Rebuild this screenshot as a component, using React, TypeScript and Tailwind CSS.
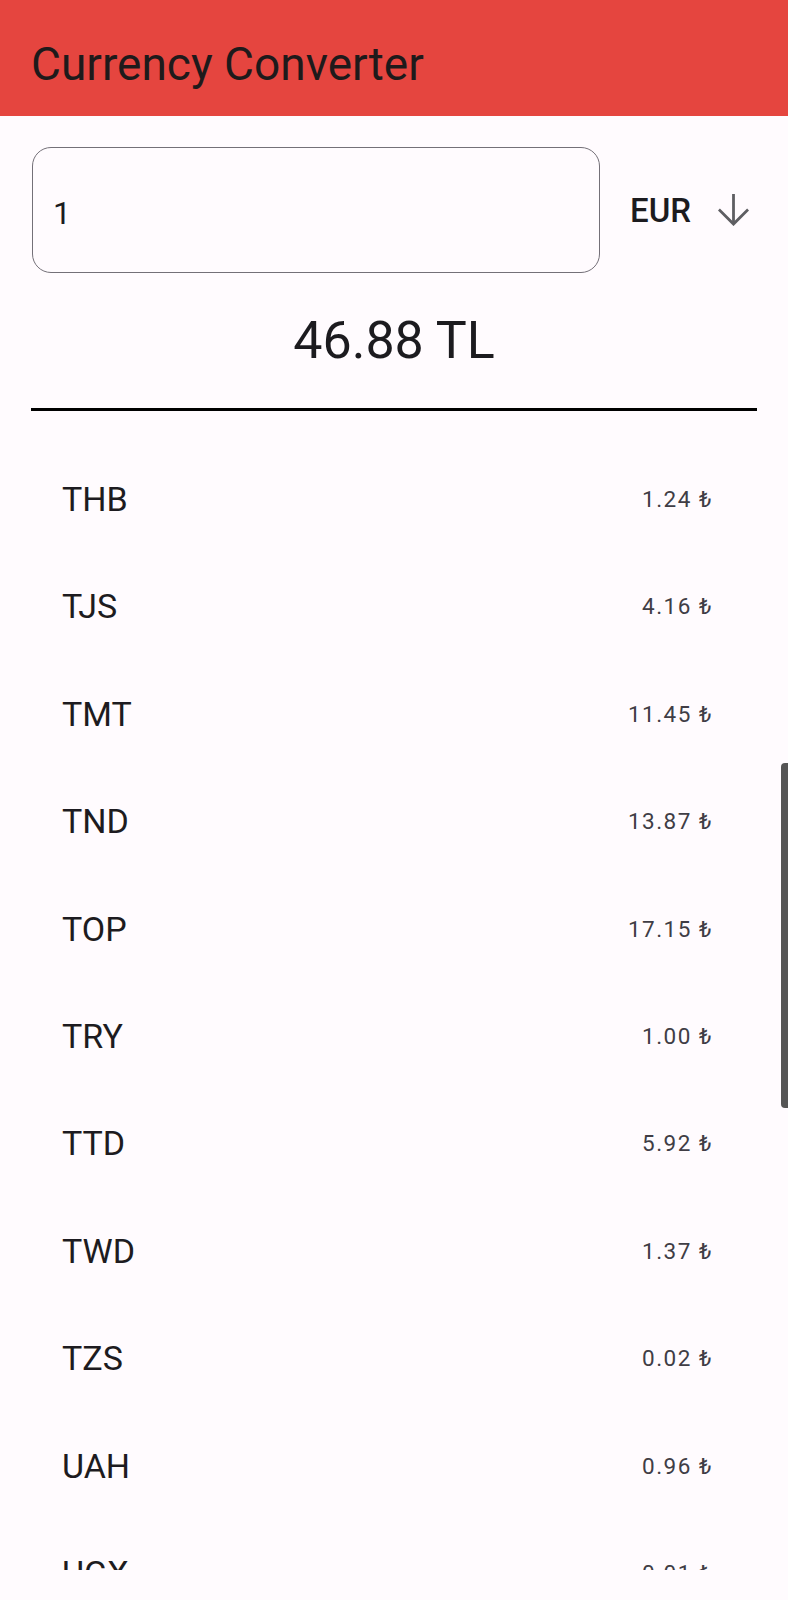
import React from "react";

const rows: [string, string][] = [
  ["THB", "1.24"],
  ["TJS", "4.16"],
  ["TMT", "11.45"],
  ["TND", "13.87"],
  ["TOP", "17.15"],
  ["TRY", "1.00"],
  ["TTD", "5.92"],
  ["TWD", "1.37"],
  ["TZS", "0.02"],
  ["UAH", "0.96"],
  ["UGX", "0.01"],
];

export default function App() {
  return (
    <div
      className="relative w-[788px] h-[1600px] overflow-hidden bg-[#FFFBFE] text-[#1C1B1F]"
      style={{ fontFamily: "Roboto, 'Noto Sans', 'DejaVu Sans', sans-serif" }}
    >
      <header className="h-[116px] bg-[#E5453F] pt-[41px] pl-[31px]">
        <h1 className="text-[46px] leading-[46px] font-normal text-[#1E1A1B]">Currency Converter</h1>
      </header>

      <div className="flex items-center pl-[32px] pr-[39px] mt-[31px]">
        <div className="w-[568px] h-[126px] flex-none rounded-[19px] border-[1.6px] border-[#747078] flex items-center pl-[20px] pt-[5px]">
          <span className="text-[32px] leading-[32px] text-[#1C1B1F]">1</span>
        </div>
        <div className="flex-1 ml-[30px] flex items-center justify-between">
          <span className="text-[33px] leading-[33px] font-medium text-[#1C1B1F]">EUR</span>
          <svg width="31" height="32" viewBox="0 0 31 32" className="flex-none">
            <path d="M15.5 0 V30" stroke="#5E5E62" strokeWidth="2.8" fill="none" />
            <path d="M0.9 15.5 L15.5 30.1 L30.1 15.5" stroke="#5E5E62" strokeWidth="2.8" fill="none" />
          </svg>
        </div>
      </div>

      <div className="mt-[42px] text-center text-[52px] leading-[52px] text-[#1C1B1F]">46.88 TL</div>

      <div className="mt-[41px] mx-[31px] h-[3.3px] bg-black" />

      <div className="h-[1159px] overflow-hidden pt-[34px]">
        {rows.map(([code, val]) => (
          <div key={code} className="h-[107.4px] flex items-center justify-between pl-[62px] pr-[75px]">
            <span className="text-[34px] leading-[40px] text-[#1D1B20]">{code}</span>
            <span className="text-[22.5px] leading-[28px] font-normal tracking-[1.5px] text-[#403D45]">
              {val} ₺
            </span>
          </div>
        ))}
      </div>

      <div className="absolute right-0 top-[763px] w-[7px] h-[345px] bg-[#555555] rounded-l-[4px]" />
    </div>
  );
}
